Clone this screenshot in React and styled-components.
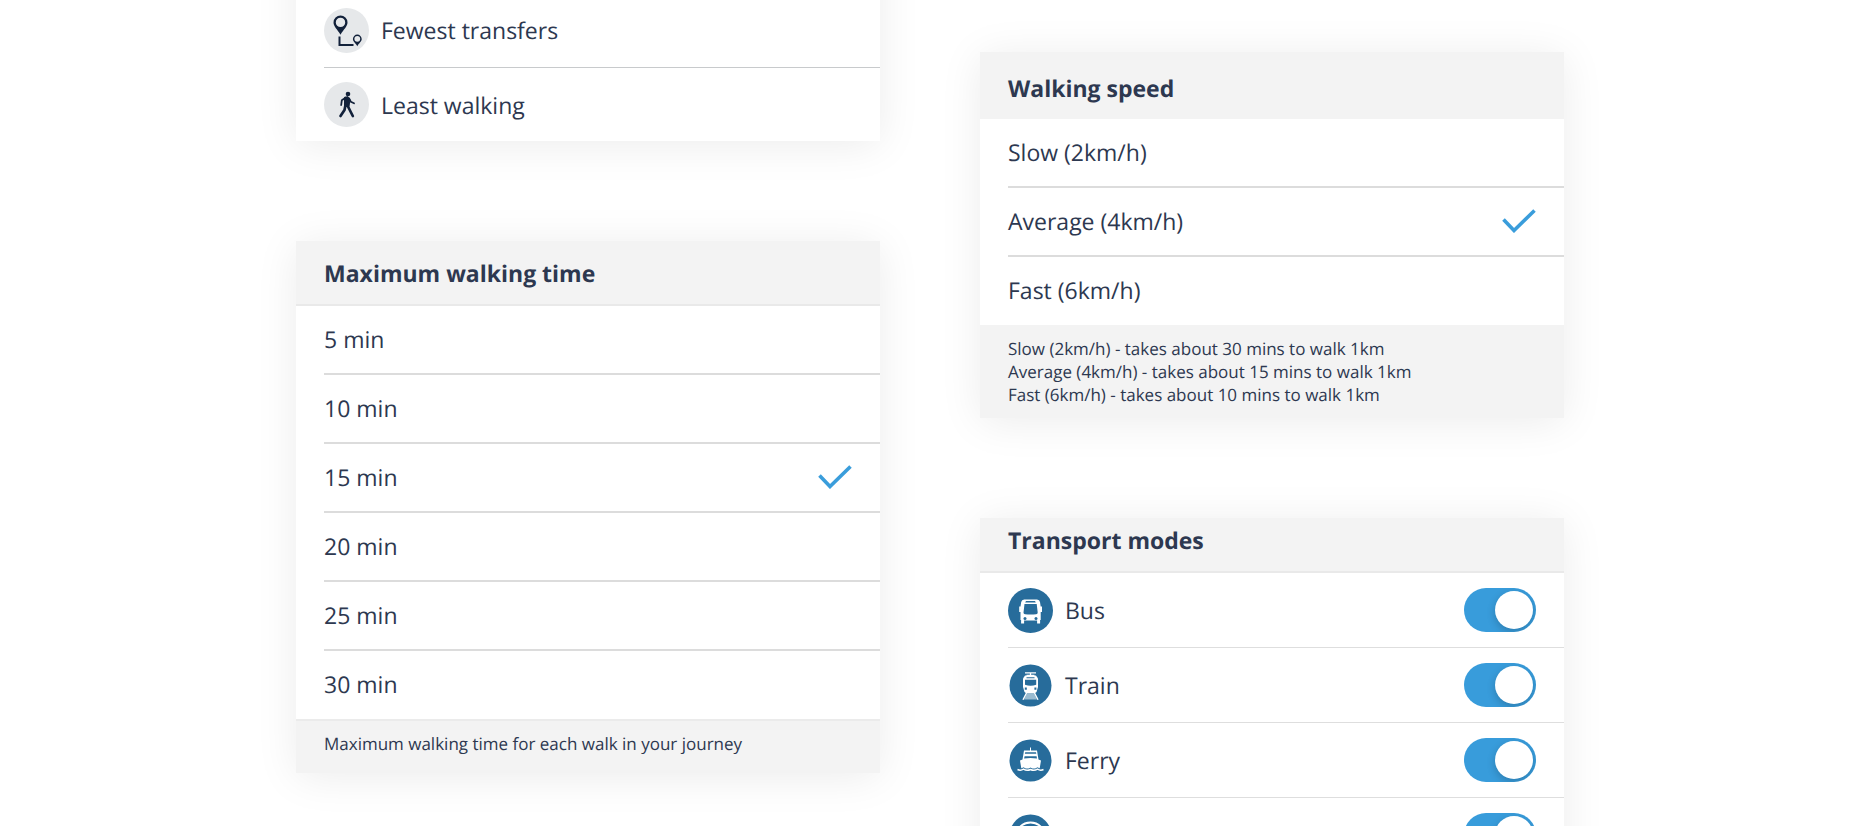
import React, { useState } from "react";
import styled, { createGlobalStyle } from "styled-components";

const walkingTimes = ["5 min", "10 min", "15 min", "20 min", "25 min", "30 min"];
const walkingSpeeds = ["Slow (2km/h)", "Average (4km/h)", "Fast (6km/h)"];

export default function App() {
    return(
        <>
            <GlobalStyle />
            <StyledPage>
                <StyledColumn>
                    <TripCard />
                    <OptionCard
                        name="walking-time"
                        title="Maximum walking time"
                        options={walkingTimes}
                        initial="15 min"
                        lined
                    >
                        <StyledNote>Maximum walking time for each walk in your journey</StyledNote>
                    </OptionCard>
                </StyledColumn>
                <StyledColumn $top="52px">
                    <OptionCard
                        name="walking-speed"
                        title="Walking speed"
                        options={walkingSpeeds}
                        initial="Average (4km/h)"
                    >
                        <StyledNote>Slow (2km/h) - takes about 30 mins to walk 1km</StyledNote>
                        <StyledNote>Average (4km/h) - takes about 15 mins to walk 1km</StyledNote>
                        <StyledNote>Fast (6km/h) - takes about 10 mins to walk 1km</StyledNote>
                    </OptionCard>
                    <TransportCard />
                </StyledColumn>
            </StyledPage>
        </>
    )
}

const TripCard = () => (
    <StyledCard $open>
        <StyledTripButton type="button">
            <TransfersIcon />
            Fewest transfers
        </StyledTripButton>
        <StyledTripButton type="button">
            <WalkingIcon />
            Least walking
        </StyledTripButton>
    </StyledCard>
)

const OptionCard = ({ name, title, options, initial, lined, children }) => {
    const [selected, setSelected] = useState(initial);

    return(
        <StyledCard>
            <StyledHeader $size={lined ? "medium" : "tall"}>
                <StyledTitle>{title}</StyledTitle>
            </StyledHeader>
            <StyledList>
                {options.map((option) => (
                    <StyledOption key={option}>
                        {option}
                        <StyledRadio
                            type="radio"
                            name={name}
                            checked={selected === option}
                            onChange={() => setSelected(option)}
                        />
                        {selected === option && <CheckIcon />}
                    </StyledOption>
                ))}
            </StyledList>
            <StyledFooter $lined={lined}>{children}</StyledFooter>
        </StyledCard>
    )
}

const TransportCard = () => {
    const [modes, setModes] = useState({ bus: true, train: true, ferry: true, metro: true });

    const toggle = (mode) => setModes({ ...modes, [mode]: !modes[mode] });

    return(
        <StyledCard>
            <StyledHeader $size="short">
                <StyledTitle>Transport modes</StyledTitle>
            </StyledHeader>
            <StyledList>
                <StyledMode>
                    <BusIcon />
                    <StyledModeName>Bus</StyledModeName>
                    <StyledSwitch type="checkbox" checked={modes.bus} onChange={() => toggle("bus")} />
                </StyledMode>
                <StyledMode>
                    <TrainIcon />
                    <StyledModeName>Train</StyledModeName>
                    <StyledSwitch type="checkbox" checked={modes.train} onChange={() => toggle("train")} />
                </StyledMode>
                <StyledMode>
                    <FerryIcon />
                    <StyledModeName>Ferry</StyledModeName>
                    <StyledSwitch type="checkbox" checked={modes.ferry} onChange={() => toggle("ferry")} />
                </StyledMode>
                <StyledMode>
                    <RingIcon />
                    <StyledModeName />
                    <StyledSwitch type="checkbox" checked={modes.metro} onChange={() => toggle("metro")} />
                </StyledMode>
            </StyledList>
        </StyledCard>
    )
}

const CheckIcon = () => (
    <svg width="34" height="24" viewBox="0 0 34 24" fill="none" aria-hidden="true">
        <path d="M1.5 10.5 L12 21.5 L32.5 1.5" stroke="#3a9ddb" strokeWidth="3.6" />
    </svg>
)

const TransfersIcon = () => (
    <StyledIcon viewBox="0 0 45 45" aria-hidden="true">
        <circle cx="22.5" cy="22.5" r="22.5" fill="#e6e8ea" />
        <path fill="#12213a" fillRule="evenodd" d="M16.5 7.5a7 7 0 0 1 7 7c0 4-4 7-7 12.2c-3-5.2-7-8.2-7-12.2a7 7 0 0 1 7-7zm0 2.200a4.700 4.700 0 1 0 0 9.400a4.700 4.700 0 0 0 0-9.400z" />
        <path fill="#12213a" fillRule="evenodd" d="M33.3 26.6a4.4 4.400 0 0 1 4.4 4.400c0 2.600-2.600 4-4.400 7.200c-1.800-3.200-4.400-4.600-4.400-7.200a4.400 4.400 0 0 1 4.400-4.400zm0 1.300a2.900 2.900 0 1 0 0 5.800a2.900 2.900 0 0 0 0-5.800z" />
        <path d="M15.5 28.5V37H29.500" fill="none" stroke="#12213a" strokeWidth="2" />
    </StyledIcon>
)

const WalkingIcon = () => (
    <StyledIcon viewBox="0 0 45 45" aria-hidden="true">
        <circle cx="22.5" cy="22.5" r="22.5" fill="#e6e8ea" />
        <circle cx="24" cy="12" r="2.3" fill="#12213a" />
        <path d="M20.5 15.3L24 14.7L26 17L25 24.5L20.5 24Z" fill="#12213a" stroke="#12213a" strokeLinejoin="round" />
        <path d="M21.5 15.8L17.8 18.3L17.2 23M25 16.5L26.8 19.8L30 21.3" fill="none" stroke="#12213a" strokeWidth="1.8" strokeLinecap="round" strokeLinejoin="round" />
        <path d="M21.5 23L20.5 28L16.5 34M23.5 23.5L26 28.5L28.8 34" fill="none" stroke="#12213a" strokeWidth="2.7" strokeLinecap="round" strokeLinejoin="round" />
    </StyledIcon>
)

const BusIcon = () => (
    <StyledIcon viewBox="0 0 45 45" aria-hidden="true">
        <circle cx="22.5" cy="22.5" r="22.5" fill="#276c9b" />
        <path fill="#fff" d="M16 11.5h13q2.500 0 3 2.500l.7 4.500h1.300v5.500h-1.300v8h-.6v3.500h-3v-3h-13v3h-3v-3.500h-.6v-8h-1.300v-5.500h1.300l.7-4.500q.5-2.500 3-2.500z" />
        <path fill="#276c9b" d="M18 13h9l.8 1.500h-10.600zM16.500 16h12.200l1 8.500q0 1.500-1.500 1.700q-5.700.8-11.200 0q-1.500-.2-1.500-1.700z" />
        <circle cx="17" cy="30.5" r="1.5" fill="#276c9b" />
        <circle cx="28" cy="30.5" r="1.5" fill="#276c9b" />
    </StyledIcon>
)

const TrainIcon = () => (
    <StyledIcon viewBox="0 0 45 45" aria-hidden="true">
        <circle cx="22.5" cy="22.5" r="21" fill="#276c9b" />
        <path d="M17 9.8h11M22.500 10v3M18.500 12.500h8" stroke="#fff" strokeWidth="1.3" />
        <path fill="#fff" d="M17 12.500h11l2 3v8.500l-1.500 5-2 1.500h-8l-2-1.500-1.500-5v-8.500z" />
        <path fill="#276c9b" d="M18.500 14.300h8v.9h-8zM17 16.800h11.200v5q-5.600 2-11.200 0zM16.800 24.500h2v2.300h-2zM26.400 24.500h2v2.300h-2z" />
        <path fill="#9abbd0" d="M19 30h7l3 6.500h-13z" />
        <path d="M18.500 30L15 36.800M26.500 30L30 36.800" stroke="#fff" strokeWidth="1.4" />
    </StyledIcon>
)

const FerryIcon = () => (
    <StyledIcon viewBox="0 0 45 45" aria-hidden="true">
        <circle cx="22.5" cy="22.5" r="21" fill="#276c9b" />
        <path d="M22.5 9.5v4" stroke="#fff" strokeWidth="1" />
        <path fill="#fff" d="M16 12.5h13l1.500 9 2.500 1-1.500 9h-18l-1.500-9 2.500-1z" />
        <path fill="#276c9b" d="M17.200 14.300h10.800l.3 1.500h-11.400zM16.600 18.200h12l.4 2.300q-6.500-1-12.900 0z" />
        <path d="M9.500 31.500q3 1.500 6-.3q3.500 2 7 .3q3.500 1.700 7-.3q3 1.800 6 .3" fill="none" stroke="#276c9b" strokeWidth="3.5" />
        <path d="M9.500 31.500q3 1.500 6-.3q3.500 2 7 .3q3.500 1.700 7-.3q3 1.800 6 .3" fill="none" stroke="#fff" strokeWidth="1.500" />
    </StyledIcon>
)

const RingIcon = () => (
    <StyledIcon viewBox="0 0 45 45" aria-hidden="true">
        <circle cx="22.5" cy="22.5" r="21" fill="#276c9b" />
        <circle cx="22.5" cy="24.5" r="15" fill="none" stroke="#fff" strokeWidth="1.8" />
    </StyledIcon>
)

const GlobalStyle = createGlobalStyle`
    * {
        box-sizing: border-box;
    }
    body {
        margin: 0;
        background: #fff;
        color: #2d3850;
        font-family: "Open Sans", sans-serif;
        font-size: 23px;
        text-rendering: geometricPrecision;
    }
`;
const StyledPage = styled.main`
    height: 100vh;
    padding: 0 24px;
    display: flex;
    justify-content: center;
    gap: 100px;
    overflow: hidden;
`;
const StyledColumn = styled.div`
    flex: 0 1 584px;
    padding-top: ${(props) => props.$top || 0};
    display: flex;
    flex-direction: column;
    gap: 100px;
`;
/* an open card carries on above the top edge of the page */
const StyledCard = styled.section`
    flex-shrink: 0;
    margin-top: ${(props) => (props.$open ? "-80px" : "0")};
    padding-top: ${(props) => (props.$open ? "73px" : "0")};
    background: #fff;
    box-shadow: 0 4px 40px rgba(0, 0, 0, 0.08);
`;
const headerSizes = {
    short: { height: "55px", padding: "0 28px 10px" },
    medium: { height: "65px", padding: "0 28px" },
    tall: { height: "67px", padding: "4px 28px 0" },
};
const StyledHeader = styled.header`
    height: ${(props) => headerSizes[props.$size].height};
    padding: ${(props) => headerSizes[props.$size].padding};
    display: flex;
    align-items: center;
    background: #f3f3f3;
    border-bottom: ${(props) => (props.$size === "tall" ? "none" : "2px solid #e9e9e9")};
`;
const StyledTitle = styled.h2`
    margin: 0;
    font-size: 23px;
    font-weight: 700;
    line-height: 32px;
`;
const StyledList = styled.div`
    padding-left: 28px;
`;
const StyledOption = styled.label`
    height: 69px;
    padding: 0 28px 2px 0;
    display: flex;
    align-items: center;
    justify-content: space-between;
    border-bottom: 2px solid #dcdcdc;
    cursor: pointer;

    &:last-child {
        height: 68px;
        border-bottom: none;
    }
`;
const StyledRadio = styled.input`
    width: 0;
    height: 0;
    margin: 0 auto;
    appearance: none;
`;
const StyledFooter = styled.footer`
    padding: ${(props) => (props.$lined ? "11px 28px 18px" : "12px 28px")};
    background: #f3f3f3;
    border-top: ${(props) => (props.$lined ? "2px solid #ebebeb" : "none")};
`;
const StyledNote = styled.p`
    margin: 0;
    font-size: 17px;
    line-height: 23px;
`;
const StyledTripButton = styled.button`
    width: calc(100% - 28px);
    height: 75px;
    margin-left: 28px;
    padding: 0;
    display: flex;
    align-items: center;
    gap: 12px;
    color: inherit;
    font: inherit;
    text-rendering: inherit;
    background: transparent;
    border: none;
    border-bottom: 1px solid #c8cacc;
    cursor: pointer;

    &:last-child {
        height: 73px;
        border-bottom: none;
    }
`;
const StyledIcon = styled.svg`
    width: 45px;
    height: 45px;
    flex-shrink: 0;
`;
const StyledMode = styled.label`
    height: 75px;
    padding-right: 28px;
    display: flex;
    align-items: center;
    gap: 12px;
    border-bottom: 1px solid #dedede;
    cursor: pointer;
`;
const StyledModeName = styled.span`
    flex: 1;
`;
const StyledSwitch = styled.input`
    width: 72px;
    height: 44px;
    margin: 0;
    padding: 3px;
    display: flex;
    justify-content: ${(props) => (props.checked ? "flex-end" : "flex-start")};
    appearance: none;
    background: ${(props) => (props.checked ? "#389cdb" : "#c4c8ce")};
    border-radius: 22px;
    overflow: hidden;
    cursor: pointer;

    &::before {
        content: "";
        width: 38px;
        height: 38px;
        background: #fff;
        border-radius: 50%;
        box-shadow: 0 3px 8px rgba(0, 0, 0, 0.2);
    }
`;
